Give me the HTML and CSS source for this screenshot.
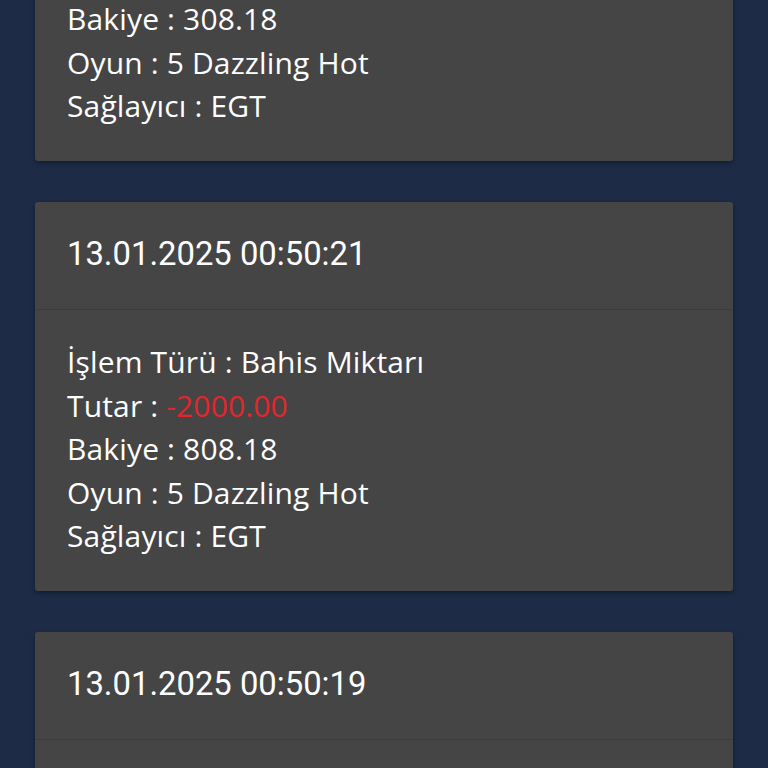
FILE: index.html
```html
<!DOCTYPE html>
<html lang="tr">
<head>
<meta charset="utf-8">
<link rel="stylesheet" href="styles.css">
</head>
<body>
<div class="list">
  <div class="card">
    <div class="card-head">13.01.2025 00:50:23</div>
    <div class="card-body">
      <div class="row">İşlem Türü : Bahis Miktarı</div>
      <div class="row">Tutar : <span class="neg">-500.00</span></div>
      <div class="row">Bakiye : 308.18</div>
      <div class="row">Oyun : 5 Dazzling Hot</div>
      <div class="row">Sağlayıcı : EGT</div>
    </div>
  </div>
  <div class="card">
    <div class="card-head">13.01.2025 00:50:21</div>
    <div class="card-body">
      <div class="row">İşlem Türü : Bahis Miktarı</div>
      <div class="row">Tutar : <span class="neg">-2000.00</span></div>
      <div class="row">Bakiye : 808.18</div>
      <div class="row">Oyun : 5 Dazzling Hot</div>
      <div class="row">Sağlayıcı : EGT</div>
    </div>
  </div>
  <div class="card">
    <div class="card-head">13.01.2025 00:50:19</div>
    <div class="card-body">
      <div class="row">İşlem Türü : Bahis Miktarı</div>
      <div class="row">Tutar : <span class="neg">-2000.00</span></div>
      <div class="row">Bakiye : 2808.18</div>
      <div class="row">Oyun : 5 Dazzling Hot</div>
      <div class="row">Sağlayıcı : EGT</div>
    </div>
  </div>
</div>
</body>
</html>
```

FILE: styles.css
```css
html, body {
  margin: 0;
  padding: 0;
  background: #1d2b47;
  height: 768px;
  overflow: hidden;
}
.list {
  display: flex;
  flex-direction: column;
  gap: 41px;
  padding: 0 35px;
  margin-top: -228px;
}
.card {
  background: #454545;
  border-radius: 3px;
  box-shadow: 0 2px 4px rgba(0, 0, 0, 0.35);
  color: #ffffff;
  height: 389px;
  box-sizing: border-box;
}
.card-head {
  font-family: Roboto, "Liberation Sans", sans-serif;
  font-size: 32.8px;
  line-height: 40px;
  padding: 32px 32px 35px;
  border-bottom: 1px solid #3d3d3d;
}
.card-body {
  font-family: "Open Sans", Lato, sans-serif;
  font-size: 30px;
  letter-spacing: 0.15px;
  line-height: 43.5px;
  padding: 30px 32px 33px;
}
.neg {
  color: #e3262c;
}
```
